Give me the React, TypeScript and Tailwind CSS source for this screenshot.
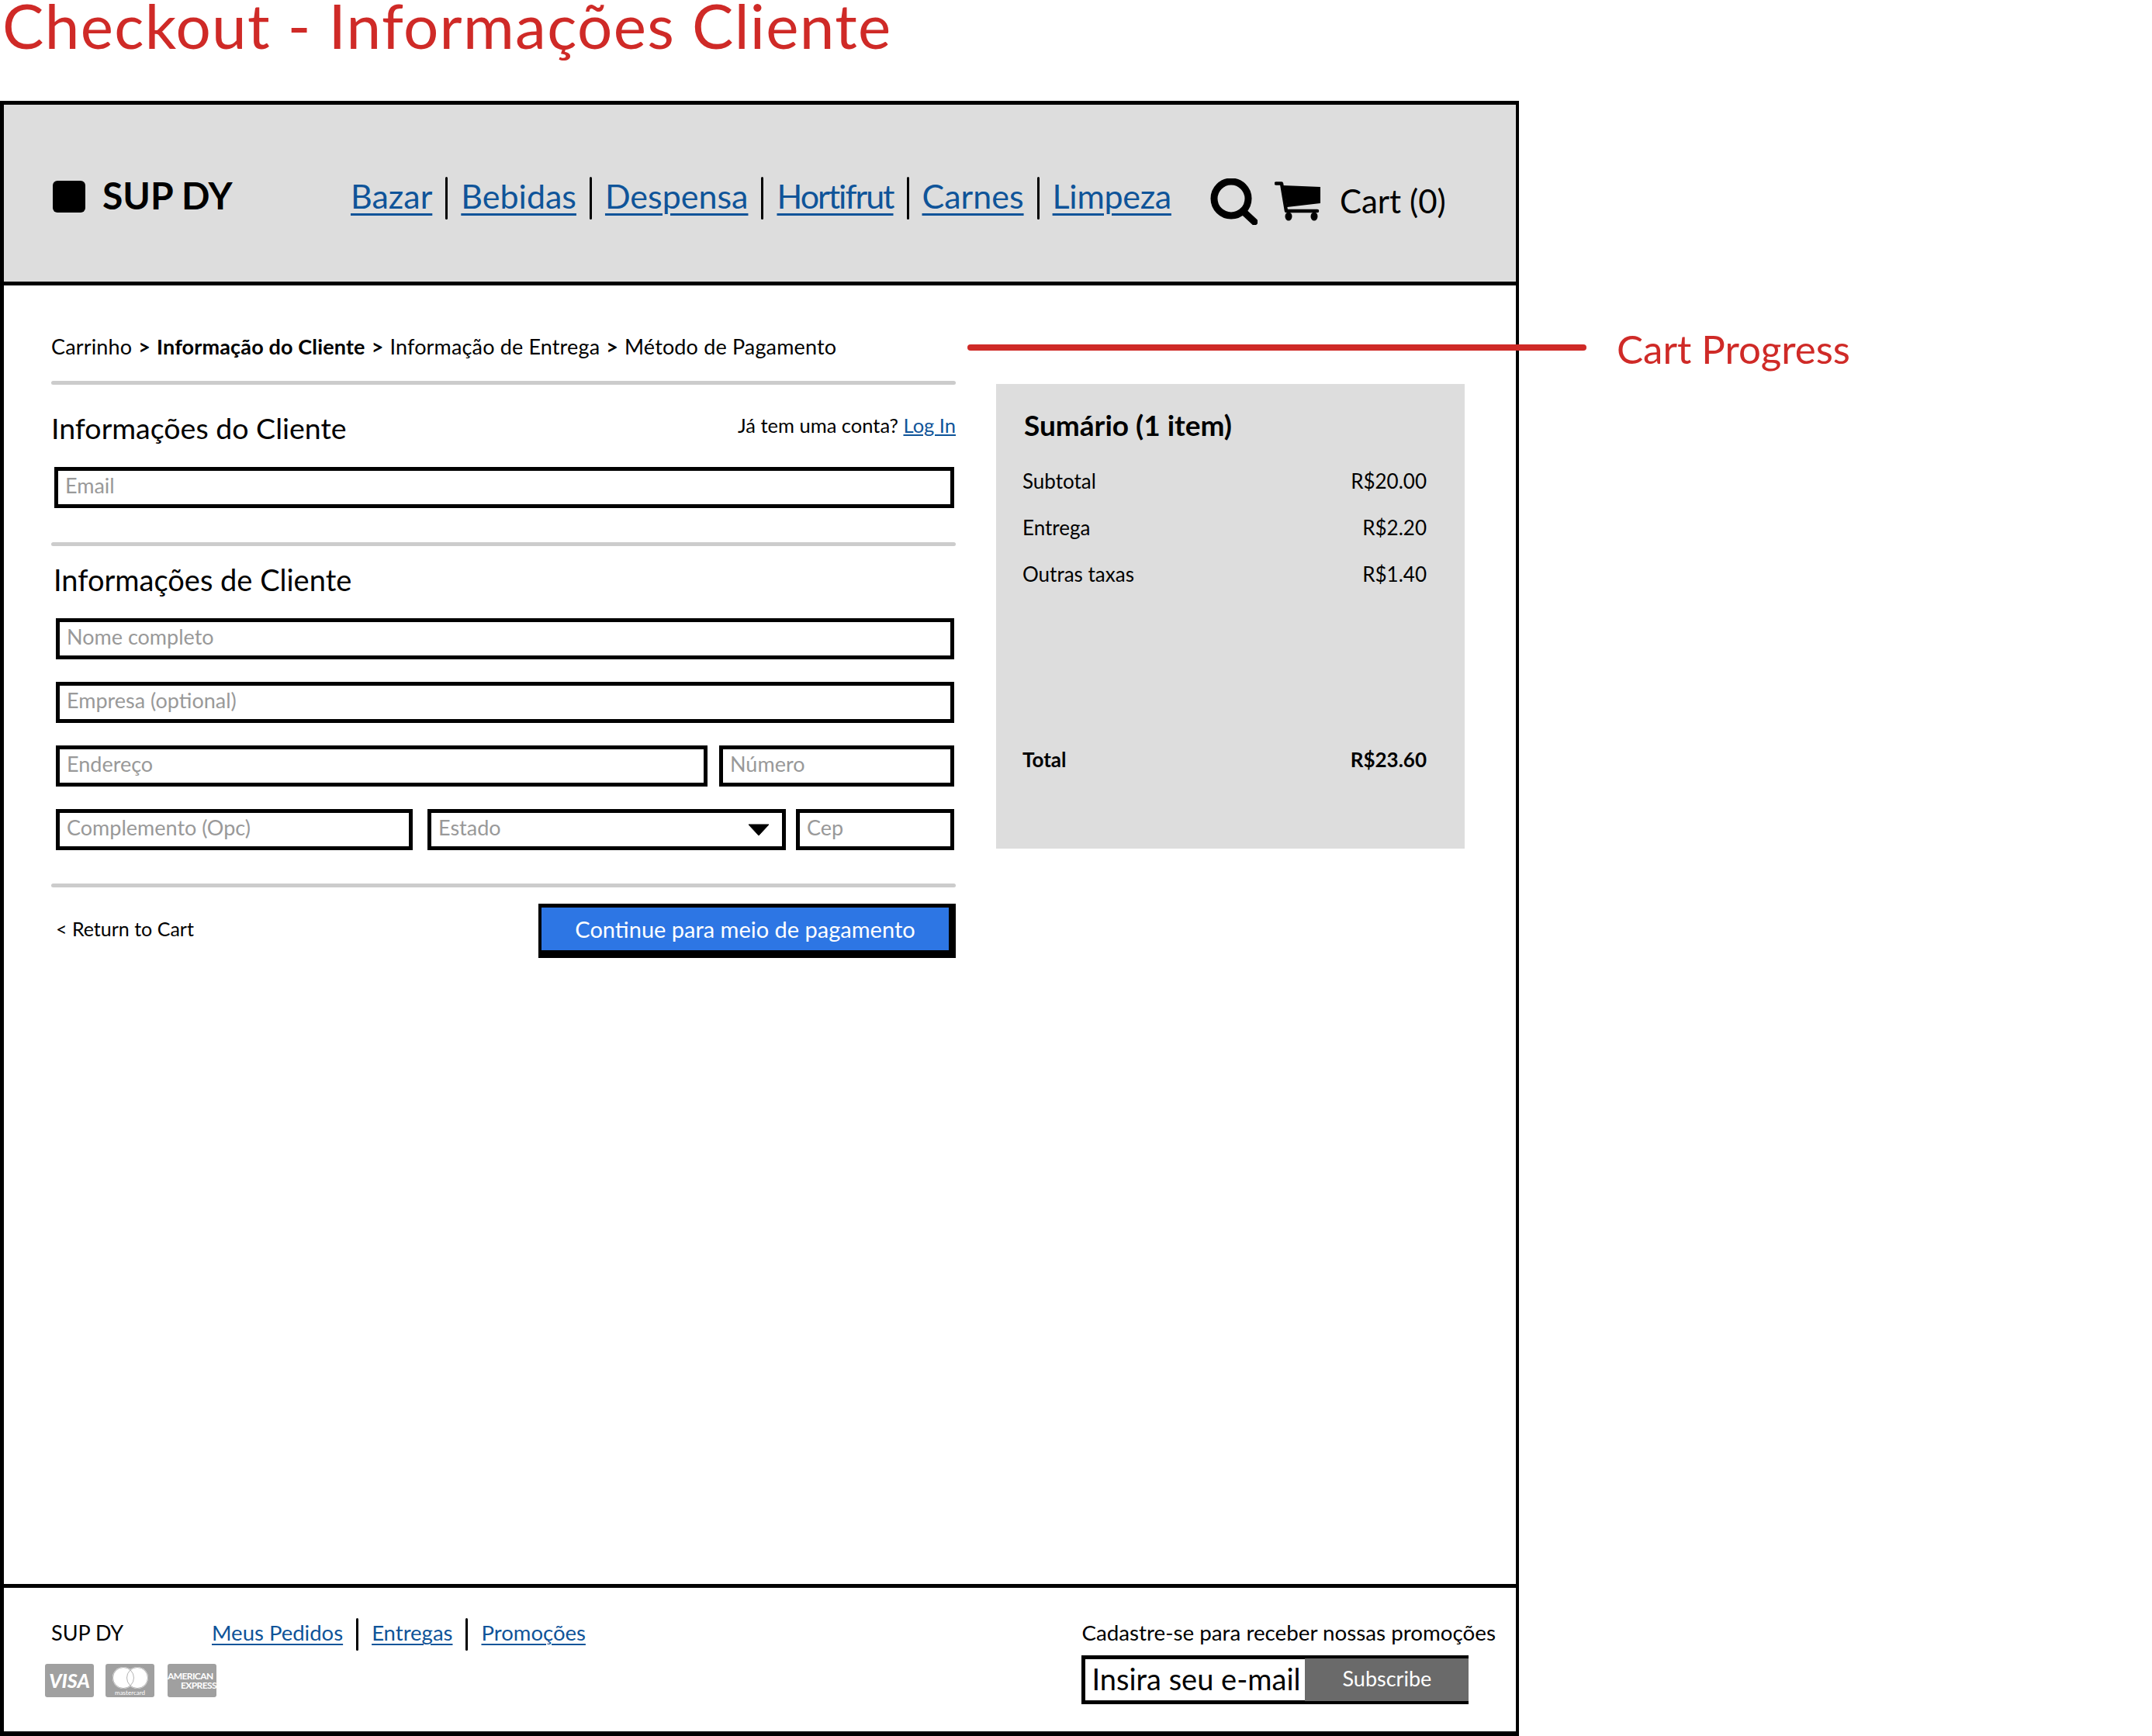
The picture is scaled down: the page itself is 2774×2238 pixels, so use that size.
const sans = "font-['Lato',sans-serif]"

const navLinks = [
    { label: 'Bazar', className: '' },
    { label: 'Bebidas', className: '' },
    { label: 'Despensa', className: '' },
    { label: 'Hortifrut', className: 'tracking-[-2px]' },
    { label: 'Carnes', className: '' },
    { label: 'Limpeza', className: 'tracking-[-0.3px]' },
]
const footerLinks = ['Meus Pedidos', 'Entregas', 'Promoções']
const summaryRows = [
    ['Subtotal', 'R$20.00'],
    ['Entrega', 'R$2.20'],
    ['Outras taxas', 'R$1.40'],
]

const Divider = ({ className = '' }: { className?: string }) => (
    <div className={`h-[5px] w-[1166px] rounded-full bg-[#cccccc] ${className}`} />
)

const Field = ({ label, className = '', children }: { label: string; className?: string; children?: React.ReactNode }) => (
    <div className={`flex h-[53px] items-center justify-between border-[5px] border-black pl-[9px] text-[27px] text-[#999999] ${className}`}>
        <span className="-mt-[5px]">{label}</span>
        {children}
    </div>
)

const SearchIcon = () => (
    <svg width="61" height="60" viewBox="0 0 61 60" className="mt-[22px]">
        <circle cx="27" cy="26" r="22" fill="none" stroke="black" strokeWidth="9" />
        <path d="M42 42 L57 56" fill="none" stroke="black" strokeWidth="9" strokeLinecap="round" />
    </svg>
)

const CartIcon = () => (
    <svg width="60" height="52" viewBox="0 0 60 52" className="mt-[22px] ml-[22px]">
        <path d="M2 2.5 H9 L15 38 H55" fill="none" stroke="black" strokeWidth="4.5" strokeLinecap="round" strokeLinejoin="round" />
        <path d="M11 5 L59 7 V28 L16 33 Z" fill="black" />
        <ellipse cx="18" cy="45" rx="4.5" ry="5.5" fill="black" />
        <ellipse cx="51" cy="45" rx="4.5" ry="5.5" fill="black" />
    </svg>
)

const Header = () => (
    <header className="flex h-[238px] shrink-0 items-center border-y-[5px] border-black bg-[#dddddd] pl-[63px]">
        <div className="mt-[6px] flex w-[384px] items-center">
            <div className="mt-[2px] h-[41px] w-[42px] rounded-md bg-black" />
            <span className="ml-[22px] text-[48px] leading-none font-bold text-black">SUP DY</span>
        </div>
        <nav className="mt-[13px] flex h-[55px] items-center">
            {navLinks.map((link, i) => (
                <div key={link.label} className="flex h-full items-center">
                    {i > 0 && <div className="mx-[17px] h-full w-[3px] rounded-full bg-black" />}
                    <a className={`-mt-[6px] text-[43px] leading-none text-[#0f5499] underline decoration-[3px] underline-offset-[6px] ${link.className}`}>{link.label}</a>
                </div>
            ))}
        </nav>
        <div className="ml-[50px] flex items-center">
            <SearchIcon />
            <CartIcon />
            <span className="mt-[20px] ml-[24px] text-[42px] leading-none text-black">Cart (0)</span>
        </div>
    </header>
)

const Breadcrumb = () => (
    <div className="flex h-[123px] items-start pt-[60px] text-[27px] leading-[38px] tracking-[0.15px] text-black">
        <span>Carrinho</span>
        <span className="mx-[8px] font-bold">&gt;</span>
        <span className="font-bold">Informação do Cliente</span>
        <span className="mx-[8px] font-bold">&gt;</span>
        <span>Informação de Entrega</span>
        <span className="mx-[8px] font-bold">&gt;</span>
        <span>Método de Pagamento</span>
    </div>
)

const CheckoutForm = () => (
    <div className="flex w-[1166px] flex-col">
        <Divider />
        <div className="mt-[33px] flex h-[46px] items-center justify-between">
            <h2 className="text-[37.5px] leading-none text-black">Informações do Cliente</h2>
            <p className="-mt-[8px] text-[25.5px] text-black">
                Já tem uma conta? <a className="text-[#0f5499] underline">Log In</a>
            </p>
        </div>
        <div className="mt-[27px] pr-[2px] pl-[4px]">
            <Field label="Email" />
        </div>
        <Divider className="mt-[44px]" />
        <h2 className="mt-[20px] flex h-[46px] items-center pl-[3px] text-[38px] leading-none text-black">Informações de Cliente</h2>
        <div className="mt-[27px] flex flex-col gap-[29px] pr-[2px] pl-[6px]">
            <Field label="Nome completo" />
            <Field label="Empresa (optional)" />
            <div className="flex gap-[15px]">
                <Field label="Endereço" className="w-[840px]" />
                <Field label="Número" className="flex-1" />
            </div>
            <div className="flex">
                <Field label="Complemento (Opc)" className="w-[460px]" />
                <Field label="Estado" className="ml-[19px] w-[462px]">
                    <svg width="28" height="16" viewBox="0 0 28 16" className="mr-[16px]">
                        <path d="M1 1 H27 L14 15 Z" fill="black" stroke="black" strokeLinejoin="round" />
                    </svg>
                </Field>
                <Field label="Cep" className="ml-[13px] flex-1" />
            </div>
        </div>
        <Divider className="mt-[43px]" />
        <div className="mt-[21px] flex items-center justify-between pl-[6px]">
            <a className="-mt-[5px] text-[25px] text-black">&lt; Return to Cart</a>
            <button className="flex h-[70px] w-[538px] items-center justify-center border-t-[5px] border-r-[9px] border-b-[10px] border-l-[4px] border-black bg-[#2d76e4] text-[29px] text-white">
                Continue para meio de pagamento
            </button>
        </div>
    </div>
)

const Summary = () => (
    <aside className="mt-[4px] ml-[52px] flex h-[599px] w-[604px] flex-col bg-[#dddddd] pr-[49px] pl-[34px] text-[26px] text-black">
        <h3 className="mt-[31px] pl-[2px] text-[37px] leading-[44px] font-bold">Sumário (1 item)</h3>
        <div className="mt-[30px] flex flex-col gap-[20px]">
            {summaryRows.map(([label, value]) => (
                <div key={label} className="flex h-[40px] items-center justify-between">
                    <span>{label}</span>
                    <span>{value}</span>
                </div>
            ))}
        </div>
        <div className="mt-[199px] flex h-[40px] items-center justify-between font-bold">
            <span>Total</span>
            <span>R$23.60</span>
        </div>
    </aside>
)

const PaymentCards = () => (
    <div className="mt-[17px] -ml-[8px] flex gap-[15px] text-white">
        <div className="flex h-[43px] w-[63px] items-center justify-center rounded-[3px] bg-[#a0a0a0] text-[25px] leading-none font-black italic">VISA</div>
        <div className="flex h-[43px] w-[63px] flex-col items-center rounded-[3px] bg-[#a0a0a0] pt-[4px]">
            <svg width="46" height="28" viewBox="0 0 46 28">
                <circle cx="14" cy="14" r="14" fill="white" />
                <circle cx="32" cy="14" r="14" fill="white" />
                <circle cx="14" cy="14" r="13.5" fill="none" stroke="#a0a0a0" strokeWidth="0.8" />
                <circle cx="32" cy="14" r="13.5" fill="none" stroke="#a0a0a0" strokeWidth="0.8" />
            </svg>
            <span className="text-[8px] leading-[10px]">mastercard</span>
        </div>
        <div className="ml-[2px] flex h-[43px] w-[63px] flex-col items-end justify-center overflow-hidden rounded-[3px] bg-[#a0a0a0] text-[12px] leading-[12px] font-bold">
            <span className="w-full text-left tracking-[-0.6px]">AMERICAN</span>
            <span className="tracking-[-0.6px]">EXPRESS</span>
        </div>
    </div>
)

const Footer = () => (
    <footer className="flex h-[196px] shrink-0 justify-between border-t-[5px] border-b-[6px] border-black pr-[26px] pl-[61px]">
        <div className="flex flex-col pt-[39px]">
            <div className="flex h-[42px] items-center">
                <span className="-mt-[4px] w-[207px] text-[27px] text-black">SUP DY</span>
                {footerLinks.map((link, i) => (
                    <div key={link} className="flex h-full items-center">
                        {i > 0 && <div className="mx-[17px] h-full w-[3px] rounded-full bg-black" />}
                        <a className="-mt-[4px] text-[27.5px] leading-none text-[#0f5499] underline decoration-2 underline-offset-[4px]">{link}</a>
                    </div>
                ))}
            </div>
            <PaymentCards />
        </div>
        <div className="flex flex-col pt-[40px]">
            <p className="h-[36px] text-[27.75px] leading-[36px] text-black">Cadastre-se para receber nossas promoções</p>
            <div className="mt-[11px] flex h-[63px] w-[499px] border-y-[5px] border-l-[5px] border-black">
                <div className="-mt-[3px] flex flex-1 items-center pl-[8px] text-[38px] text-black">Insira seu e-mail</div>
                <div className="-my-[1px] flex w-[211px] items-center justify-center bg-[#6a6a6a] pb-[3px] text-[27px] text-white">Subscribe</div>
            </div>
        </div>
    </footer>
)

export default function App() {
    return (
        <div className={`relative h-[2238px] w-[2774px] bg-white ${sans}`}>
            <h1 className="h-[130px] pl-[3px] text-[80px] leading-[64px] tracking-[1.3px] text-[#cf2a27]">Checkout - Informações Cliente</h1>
            <div className="flex h-[2108px] w-[1958px] flex-col border-r-[4px] border-l-[5px] border-black">
                <Header />
                <main className="flex-1 px-[61px]">
                    <Breadcrumb />
                    <div className="flex items-start">
                        <CheckoutForm />
                        <Summary />
                    </div>
                </main>
                <Footer />
            </div>
            <div className="absolute top-[444px] left-[1247px] h-[8px] w-[798px] rounded-full bg-[#cf2a27]" />
            <span className="absolute top-[422px] left-[2084px] text-[51px] leading-[56px] text-[#cf2a27]">Cart Progress</span>
        </div>
    )
}
